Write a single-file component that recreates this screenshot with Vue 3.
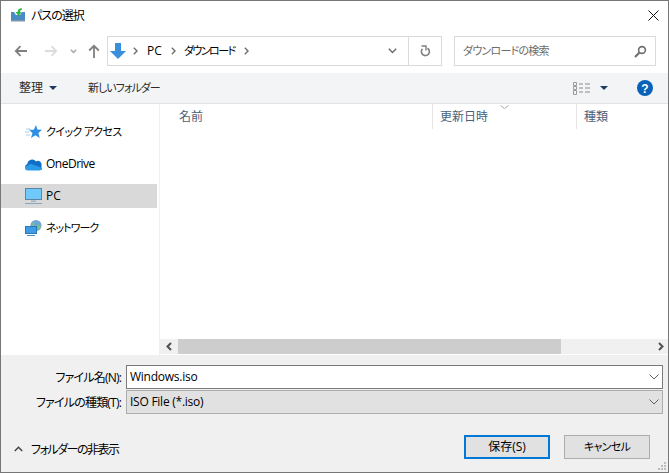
<script setup>
const places = [
  { name: 'クイック アクセス', icon: 'star' },
  { name: 'OneDrive', icon: 'cloud' },
  { name: 'PC', icon: 'pc', active: true },
  { name: 'ネットワーク', icon: 'net' }
]
const columns = [
  { name: '名前', width: 273 },
  { name: '更新日時', width: 144 },
  { name: '種類', width: 92 }
]
</script>

<template>
  <div class="dialog">
    <header class="title">
      <svg class="title-icon" width="14" height="14" viewBox="0 0 14 14">
        <path d="M0 4h3l2 3h4l2-3h3v9H0z" fill="#4a8cc4" />
        <path d="M0 12h14v1.500H0z" fill="#7f93a6" />
        <path d="M10.500 0C8 .5 6.800 1.800 6.500 4H4.500l3 4 3.300-4H8.900c.2-1.300.8-2 2.100-2.500z" fill="#2fb54a" />
      </svg>
      <span class="title-text">パスの選択</span>
      <svg class="close" width="11" height="11" viewBox="0 0 11 11">
        <path d="M.5.500l10 10M10.500.500l-10 10" stroke="#111" stroke-width="1" fill="none" />
      </svg>
    </header>

    <nav class="nav">
      <div class="nav-buttons">
        <svg class="back" width="14" height="12" viewBox="0 0 14 12"><path d="M13 6H2M6.500 1.200L1.800 6l4.700 4.800" stroke="#7f7f7f" stroke-width="1.800" fill="none" /></svg>
        <svg class="forward" width="14" height="12" viewBox="0 0 14 12"><path d="M1 6h11M7.500 1.200L12.200 6l-4.700 4.800" stroke="#dcdcdc" stroke-width="1.800" fill="none" /></svg>
        <svg class="recent" width="7" height="5" viewBox="0 0 7 5"><path d="M.8.800L3.500 3.500 6.200.800" stroke="#a6a6a6" stroke-width="1.500" fill="none" /></svg>
        <svg class="up" width="12" height="14" viewBox="0 0 12 14"><path d="M6 14V2M1.200 6.500L6 1.800l4.800 4.700" stroke="#7f7f7f" stroke-width="1.800" fill="none" /></svg>
      </div>
      <div class="address">
        <svg class="folder-arrow" width="16" height="16" viewBox="0 0 16 16"><path d="M5 0h6v8h5l-8 8-8-8h5z" fill="#3a8fdc" /></svg>
        <svg class="crumb-sep first" width="5" height="8" viewBox="0 0 5 8"><path d="M.8.800L4 4 .8 7.200" stroke="#6e6e6e" stroke-width="1.400" fill="none" /></svg>
        <span class="crumb">PC</span>
        <svg class="crumb-sep" width="5" height="8" viewBox="0 0 5 8"><path d="M.8.800L4 4 .8 7.200" stroke="#6e6e6e" stroke-width="1.400" fill="none" /></svg>
        <span class="crumb kana">ダウンロード</span>
        <svg class="crumb-sep" width="5" height="8" viewBox="0 0 5 8"><path d="M.8.800L4 4 .8 7.200" stroke="#6e6e6e" stroke-width="1.400" fill="none" /></svg>
        <span class="spacer"></span>
        <svg class="addr-drop" width="9" height="6" viewBox="0 0 9 6"><path d="M.8.800L4.500 4.500 8.200.800" stroke="#6e6e6e" stroke-width="1.500" fill="none" /></svg>
        <span class="refresh">
          <svg width="11" height="12" viewBox="0 0 11 12"><path d="M7.500 3.200A4 4 0 1 1 2.500 3.800" stroke="#7f7f7f" stroke-width="1.600" fill="none" /><path d="M1.500 1H6v4.500" stroke="#7f7f7f" stroke-width="1.400" fill="none" /></svg>
        </span>
      </div>
      <div class="search">
        <span class="search-text">ダウンロードの検索</span>
        <svg width="13" height="13" viewBox="0 0 13 13"><circle cx="8" cy="5" r="3.400" stroke="#6e6e6e" stroke-width="1.600" fill="none" /><path d="M5.500 7.500L1 12" stroke="#6e6e6e" stroke-width="2.200" /></svg>
      </div>
    </nav>

    <div class="toolbar">
      <span class="tool organise">整理</span>
      <svg class="caret" width="8" height="4" viewBox="0 0 8 4"><path d="M0 0h8L4 4z" fill="#1e3a5f" /></svg>
      <span class="tool newfolder">新しいフォルダー</span>
      <svg class="view" width="17" height="13" viewBox="0 0 17 13">
        <path d="M.5.500h3v3h-3zM.500 4.500h3v3h-3zM.500 8.500h3v4h-3z" fill="none" stroke="#9a9a9a" />
        <path d="M6 2h4M12 2h5M6 6h4M12 6h5M6 10h4M12 10h5" stroke="#8a8a8a" />
      </svg>
      <svg class="caret view-caret" width="8" height="4" viewBox="0 0 8 4"><path d="M0 0h8L4 4z" fill="#1e3a5f" /></svg>
      <svg class="help" width="16" height="16" viewBox="0 0 16 16">
        <circle cx="8" cy="8" r="8" fill="#0a62b8" />
        <text x="8" y="12.500" text-anchor="middle" font-size="12" font-weight="700" font-family="Liberation Sans, sans-serif" fill="#fff">?</text>
      </svg>
    </div>

    <div class="browser">
      <aside class="sidebar">
        <div v-for="p in places" :key="p.name" class="place" :class="{ active: p.active }">
          <svg v-if="p.icon === 'star'" class="place-icon" width="17" height="16" viewBox="0 0 17 16">
            <path d="M11 1l1.400 4.600 4.600.2-3.600 3.100 1.300 5.100-4.200-2.800-4.500 2.800 1.500-5.100-3.700-3.100 5 0z" fill="#2f8fe0" />
            <path d="M1 5h4M0 8h4M1 11h4" stroke="#a9cdec" />
          </svg>
          <svg v-else-if="p.icon === 'cloud'" class="place-icon" width="17" height="16" viewBox="0 0 17 16">
            <path d="M3 14a3 3 0 0 1-.6-5.900A4.800 4.800 0 0 1 11 5.400a3.700 3.700 0 0 1 5.500 3.800V14z" fill="#0f6fc6" />
            <path d="M3 14.500c-1.500 0-3-.8-3-2.500C0 10.500 1.200 9.500 3 9.500c.8-1.300 2-1.800 3.200-1.500L12 10l5 2c0 1.500-1 2.500-2.500 2.500z" fill="#2b9be8" />
          </svg>
          <svg v-else-if="p.icon === 'pc'" class="place-icon" width="17" height="16" viewBox="0 0 17 16">
            <rect x=".5" y=".5" width="16" height="11" fill="#6fc9fb" stroke="#5f84a3" />
            <path d="M6 12.500h5v1.500H6z" fill="#9db3c4" />
            <path d="M0 15h17v1H0z" fill="#8aa6bd" />
          </svg>
          <svg v-else class="place-icon" width="17" height="16" viewBox="0 0 17 16">
            <circle cx="11" cy="5.500" r="5.500" fill="#6aa6d6" />
            <path d="M8 1.500c2 1 2 3 1 4s-2 1-2 0zM12 5.500c2-1 4 0 4 1.500l-3 3z" fill="#7fbf8a" />
            <rect x=".5" y="6.500" width="11" height="7" fill="#3d9ce8" stroke="#2b78b8" />
            <path d="M2 15h8v1H2z" fill="#4a8fc4" />
          </svg>
          <span class="place-name" :class="p.icon">{{ p.name }}</span>
        </div>
      </aside>
      <main class="files">
        <div class="columns">
          <div v-for="c in columns" :key="c.name" class="column" :style="{ width: c.width + 'px' }">{{ c.name }}</div>
          <svg class="sort" width="9" height="4" viewBox="0 0 9 4"><path d="M.5.500L4.500 3.500 8.500.500" stroke="#a9a9a9" fill="none" /></svg>
        </div>
        <div class="list"></div>
        <div class="hscroll">
          <svg class="sb-arrow" width="15" height="15" viewBox="0 0 15 15"><path d="M9 4L5.500 7.500 9 11" stroke="#505050" stroke-width="2" fill="none" /></svg>
          <div class="sb-track"><div class="sb-thumb"></div></div>
          <svg class="sb-arrow" width="15" height="15" viewBox="0 0 15 15"><path d="M6 4l3.500 3.500L6 11" stroke="#505050" stroke-width="2" fill="none" /></svg>
        </div>
      </main>
    </div>

    <section class="panel">
      <div class="field">
        <label class="field-label">ファイル名(N):</label>
        <div class="input name">
          <span class="value">Windows.iso</span>
          <svg width="10" height="6" viewBox="0 0 10 6"><path d="M.5.500L5 5l4.500-4.500" stroke="#606060" fill="none" /></svg>
        </div>
      </div>
      <div class="field second">
        <label class="field-label">ファイルの種類(T):</label>
        <div class="input type">
          <span class="value">ISO File (*.iso)</span>
          <svg width="10" height="6" viewBox="0 0 10 6"><path d="M.5.500L5 5l4.500-4.500" stroke="#606060" fill="none" /></svg>
        </div>
      </div>
      <div class="footer">
        <svg class="hide-chevron" width="9" height="6" viewBox="0 0 9 6"><path d="M.8 5L4.500 1.300 8.200 5" stroke="#444" stroke-width="1.500" fill="none" /></svg>
        <span class="hide-text">フォルダーの非表示</span>
        <span class="spacer"></span>
        <button class="btn primary">保存(S)</button>
        <button class="btn cancel">キャンセル</button>
      </div>
      <svg class="grip" width="9" height="9" viewBox="0 0 9 9">
        <path d="M6 0h2v2H6zM3 3h2v2H3zM6 3h2v2H6zM0 6h2v2H0zM3 6h2v2H3zM6 6h2v2H6z" fill="#bdbdbd" />
      </svg>
    </section>
  </div>
</template>

<style scoped>
.dialog {
  position: relative;
  width: 669px;
  height: 473px;
  box-sizing: border-box;
  border: 1px solid #767676;
  display: flex;
  flex-direction: column;
  background: #fff;
  overflow: hidden;
  color: #000;
  font: 12px/16px "Open Sans", "Noto Sans CJK JP", sans-serif;
  font-feature-settings: "palt";
}
.spacer { flex: 1; }

.title {
  height: 30px;
  display: flex;
  align-items: center;
  flex: none;
  padding-left: 10px;
}
.title-icon { flex: none; margin-top: -3px; }
.title-text { margin-left: 6px; letter-spacing: -1px; }
.close { margin-left: auto; margin-right: 9px; margin-top: -1px; }

.nav {
  flex: none;
  height: 30px;
  margin-top: 5px;
  margin-bottom: 7px;
  display: flex;
  align-items: stretch;
}
.nav-buttons {
  width: 106px;
  display: flex;
  align-items: center;
  flex: none;
}
.back { margin-left: 13px; }
.forward { margin-left: 16px; }
.recent { margin-left: 12px; }
.up { margin-left: 11px; }
.address {
  width: 335px;
  box-sizing: border-box;
  border: 1px solid #d9d9d9;
  display: flex;
  align-items: center;
  padding-left: 2px;
  flex: none;
}
.crumb { margin-left: 9px; }
.crumb.kana { font-size: 11px; letter-spacing: -1.5px; margin-left: 8px; }
.crumb-sep { margin-left: 9px; flex: none; }
.crumb-sep.first { margin-left: 7px; }
.addr-drop { margin-right: 11px; }
.refresh {
  width: 32px;
  height: 100%;
  border-left: 1px solid #d9d9d9;
  display: flex;
  align-items: center;
  justify-content: center;
  flex: none;
}
.search {
  margin-left: 12px;
  width: 202px;
  box-sizing: border-box;
  border: 1px solid #d9d9d9;
  display: flex;
  align-items: center;
  justify-content: space-between;
  padding: 0 8px;
  flex: none;
}
.search-text { color: #6d6d6d; font-size: 11px; letter-spacing: -.75px; }

.toolbar {
  flex: none;
  height: 31px;
  box-sizing: border-box;
  background: #f3f4f6;
  border-bottom: 1px solid #e3e3e3;
  display: flex;
  align-items: center;
  color: #2b2b2b;
}
.organise { margin-left: 18px; }
.caret { margin-left: 6px; flex: none; }
.newfolder { margin-left: 31px; font-size: 11px; letter-spacing: -1px; }
.view { flex: none; margin-left: auto; }
.view-caret { margin-left: 10px; margin-right: 29px; }
.help { margin-right: 15px; flex: none; }

.browser {
  flex: 1;
  min-height: 0;
  display: flex;
}
.sidebar {
  width: 158px;
  border-right: 1px solid #f0f0f0;
  padding-top: 16px;
  flex: none;
}
.place {
  height: 24px;
  display: flex;
  align-items: center;
  margin-bottom: 8px;
  margin-right: 2px;
  padding-left: 24px;
}
.place.active { background: #d9d9d9; }
.place-name { margin-left: 4px; }
.place-name.star { font-size: 11px; letter-spacing: -.6px; }
.place-name.cloud { letter-spacing: -.5px; }
.place-name.net { font-size: 11px; letter-spacing: -1px; }
.place-icon { flex: none; }

.files {
  flex: 1;
  min-width: 0;
  display: flex;
  flex-direction: column;
}
.columns {
  position: relative;
  height: 25px;
  display: flex;
  flex: none;
  color: #4c607a;
}
.column {
  box-sizing: border-box;
  padding: 5px 0 0 7px;
  border-right: 1px solid #e5e5e5;
  flex: none;
}
.column:first-child { padding-left: 19px; }
.column:last-of-type { border-right: 0; }
.sort { position: absolute; left: 340px; top: 1px; }
.list { flex: 1; }
.hscroll {
  flex: none;
  height: 15px;
  margin-bottom: 1px;
  background: #f0f0f0;
  display: flex;
}
.sb-arrow { flex: none; margin-left: 2px; }
.sb-arrow:last-child { margin-left: 0; }
.sb-track { flex: 1; }
.sb-thumb { width: 383px; height: 100%; background: #cdcdcd; margin-left: 1px; }

.panel {
  position: relative;
  flex: none;
  height: 117px;
  background: #f0f0f0;
  box-sizing: border-box;
  padding-top: 10px;
}
.field {
  display: flex;
  align-items: center;
  height: 24px;
}
.second { margin-top: 1px; }
.field-label {
  width: 120px;
  text-align: right;
  margin-right: 5px;
  flex: none;
  margin-top: 1px;
  letter-spacing: -.8px;
}
.input {
  width: 537px;
  height: 24px;
  box-sizing: border-box;
  border: 1px solid #7a7a7a;
  background: #fff;
  display: flex;
  align-items: center;
  justify-content: space-between;
  padding: 0 2px 0 3px;
  flex: none;
}
.value { letter-spacing: -.25px; }
.input svg { flex: none; margin-right: 1px; }
.type { background: #e1e1e1; border-color: #adadad; }
.footer {
  display: flex;
  align-items: center;
  height: 24px;
  margin-top: 21px;
}
.hide-chevron { margin-left: 13px; margin-top: 4px; flex: none; }
.hide-text { margin-left: 8px; margin-top: 5px; letter-spacing: -1.5px; }
.btn {
  width: 86px;
  height: 24px;
  box-sizing: border-box;
  border: 1px solid #adadad;
  background: #e1e1e1;
  font: inherit;
  font-feature-settings: "palt";
  color: #000;
  padding: 0;
  margin-left: 14px;
  flex: none;
}
.btn.cancel { margin-right: 18px; font-size: 11px; letter-spacing: -.7px; }
.primary { border: 2px solid #0078d7; }
.grip { position: absolute; right: 1px; bottom: 1px; }
</style>
